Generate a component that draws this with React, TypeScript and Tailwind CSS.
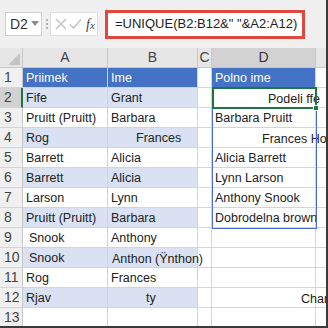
import React from "react";

const LB = "bg-[#d9e1f2]";
const HB = "bg-[#4472c4] text-white";

type Cell = { t?: string; cls?: string; tx?: string };

const rows: Cell[][] = [
  [{ t: "Priimek", cls: HB }, { t: "Ime", cls: HB }, {}, { t: "Polno ime", cls: HB }, {}],
  [{ t: "Fife", cls: LB }, { t: "Grant", cls: LB }, {}, {}, {}],
  [{ t: "Pruitt (Pruitt)" }, { t: "Barbara" }, {}, { t: "Barbara Pruitt" }, {}],
  [{ t: "Rog", cls: LB }, { t: "Frances", cls: LB, tx: "pl-[28px]" }, {}, { t: "" }, {}],
  [{ t: "Barrett" }, { t: "Alicia" }, {}, { t: "Alicia Barrett" }, {}],
  [{ t: "Barrett", cls: LB }, { t: "Alicia", cls: LB }, {}, { t: "Lynn Larson" }, {}],
  [{ t: "Larson" }, { t: "Lynn" }, {}, { t: "Anthony Snook" }, {}],
  [{ t: "Pruitt (Pruitt)", cls: LB }, { t: "Barbara", cls: LB }, {}, { t: "Dobrodelna brown" }, {}],
  [{ t: "Snook", tx: "pl-[6px]" }, { t: "Anthony" }, {}, {}, {}],
  [{ t: "Snook", cls: LB, tx: "pl-[6px]" }, { t: "", cls: LB }, {}, {}, {}],
  [{ t: "Rog" }, { t: "Frances" }, {}, {}, {}],
  [{ t: "Rjav", cls: LB }, { t: "ty", cls: LB, tx: "pl-[38px]" }, {}, {}, {}],
  [{}, {}, {}, {}, {}],
];

export default function App() {
  return (
    <div
      className="w-[328px] h-[328px] overflow-hidden bg-[#f0f0f0] relative border-r-2 border-b-2 border-[#3a3a3a]"
      style={{ fontFamily: '"Liberation Sans", Arial, sans-serif' }}
    >
      {/* formula bar */}
      <div className="h-[48px] flex items-center pl-[5px]">
        <div className="w-[37px] h-[24px] bg-white border border-[#d0d0d0] flex items-center pl-[4px] text-[14px] text-[#333]">
          D2
          <svg width="8" height="6" viewBox="0 0 8 6" className="ml-[3px]">
            <path d="M0 0H8L4 5Z" fill="#8a8a8a" />
          </svg>
        </div>
        <div className="w-[6px] ml-[2px] flex flex-col items-center gap-[2px]">
          <span className="w-[2px] h-[2px] bg-[#b0b0b0]" />
          <span className="w-[2px] h-[2px] bg-[#b0b0b0]" />
          <span className="w-[2px] h-[2px] bg-[#b0b0b0]" />
        </div>
        <div className="w-[48px] h-[24px] bg-white border border-[#e0e0e0] flex items-center gap-[2px] pl-[4px]">
          <svg width="12" height="12" viewBox="0 0 12 12">
            <path d="M1 1L11 11M11 1L1 11" stroke="#c6c6c6" strokeWidth="1.6" />
          </svg>
          <svg width="13" height="12" viewBox="0 0 13 12">
            <path d="M1 6.5L4.5 10L12 1.5" stroke="#c6c6c6" strokeWidth="1.6" fill="none" />
          </svg>
          <span
            className="italic text-[14px] text-[#444] ml-[2px]"
            style={{ fontFamily: '"Liberation Serif", serif' }}
          >
            f<span className="text-[11px]">x</span>
          </span>
        </div>
        <div className="ml-[7px] w-[200px] h-[29px] bg-white border-[3px] border-[#e0483e] flex items-center pl-[7px] text-[13px] text-[#222] whitespace-nowrap">
          =UNIQUE(B2:B12&amp;" "&amp;A2:A12)
        </div>
      </div>

      {/* sheet */}
      <div className="grid grid-cols-[23px_85px_90px_14px_104px_12px] grid-rows-[20px_repeat(13,20px)] bg-white text-[12.5px] text-[#222] relative">
        {/* header row */}
        <div className="bg-[#e6e6e6] border-r border-b border-[#c8c8c8] relative">
          <svg width="12" height="12" viewBox="0 0 12 12" className="absolute right-[2px] bottom-[2px]">
            <path d="M12 0V12H0Z" fill="#c4c4c4" />
          </svg>
        </div>
        {["A", "B", "C", "D", ""].map((c, i) => (
          <div
            key={i}
            className={`${c === "D" ? "bg-[#d2d2d2] text-[#333]" : "bg-[#e6e6e6] text-[#444]"} border-r border-b border-[#c8c8c8] flex items-center justify-center text-[14px]`}
          >
            {c}
          </div>
        ))}
        {rows.map((r, ri) => (
          <React.Fragment key={ri}>
            <div
              className={`${ri === 1 ? "bg-[#d2d2d2] border-r-2 border-r-[#217346]" : "bg-[#f0f0f0] border-r border-[#c8c8c8]"} border-b border-b-[#d4d4d4] flex items-center pl-[4px] text-[14px] text-[#444]`}
            >
              {ri + 1}
            </div>
            {r.map((c, ci) => (
              <div
                key={ci}
                className={`${c.cls ?? "bg-white"} border-r border-b border-[#d4d4d4] flex items-center pl-[3px] pt-[2px] whitespace-nowrap overflow-visible ${c.tx ?? ""}`}
              >
                {c.t}
              </div>
            ))}
          </React.Fragment>
        ))}

        {/* overflow texts */}
        <div className="absolute left-[268px] top-[41px] h-[20px] flex items-center whitespace-nowrap">
          Podeli ffe
        </div>
        <div className="absolute left-[262px] top-[81px] h-[20px] flex items-center whitespace-nowrap">
          Frances Hom
        </div>
        <div className="absolute left-[112px] top-[201px] h-[20px] flex items-center whitespace-nowrap">
          Anthon (Ÿnthon)
        </div>
        <div className="absolute left-[301px] top-[241px] h-[20px] flex items-center whitespace-nowrap">
          Chari
        </div>

        {/* spill range border */}
        <div className="absolute left-[212px] top-[40px] w-[105px] h-[141px] border border-[#4a6bd6] pointer-events-none" />
        {/* active cell */}
        <div className="absolute left-[212px] top-[39px] w-[105px] h-[22px] border-2 border-[#217346] pointer-events-none" />
        <div className="absolute left-[313px] top-[57px] w-[6px] h-[6px] bg-[#217346] border border-white" />
      </div>
    </div>
  );
}
